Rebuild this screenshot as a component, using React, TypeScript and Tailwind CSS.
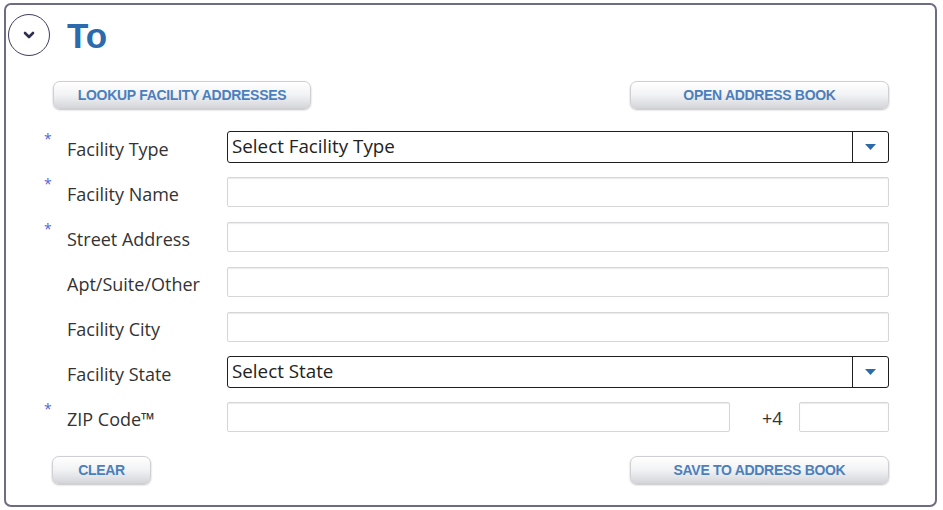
import React from "react";

const labelFont = { fontFamily: '"Open Sans", "Noto Sans", sans-serif' };

function GelButton({ label, width }: { label: string; width: string }) {
  return (
    <button
      className={`${width} h-[28px] rounded-[7px] border border-[#cfd0d4] bg-gradient-to-b from-white via-[#f1f2f4] to-[#d5d6da] shadow-[0_1px_2px_rgba(0,0,0,0.25)] text-[14px] font-bold tracking-[-0.3px] text-[#4b7fbc]`}
      style={{ fontFamily: '"Liberation Sans", Arial, sans-serif' }}
    >
      {label}
    </button>
  );
}

function Field({ kind, placeholder }: { kind: "input" | "select"; placeholder?: string }) {
  if (kind === "select") {
    return (
      <div className="flex h-[32px] w-full items-stretch rounded-[3px] border-[1.5px] border-[#1e1e1e] bg-white">
        <span className="flex flex-1 items-center pl-[4px] text-[18.8px] text-[#222]" style={labelFont}>
          {placeholder}
        </span>
        <span className="flex w-[36px] items-center justify-center border-l-[1.5px] border-[#1e1e1e]">
          <svg width="11" height="6" viewBox="0 0 11 6">
            <path d="M0 0h11L5.5 6z" fill="#2c6aa9" />
          </svg>
        </span>
      </div>
    );
  }
  return (
    <div className="h-[30px] w-full rounded-[2px] border border-[#d6d6d8] bg-white shadow-[inset_0_1px_1px_rgba(0,0,0,0.08)]" />
  );
}

const rows: { label: string; required: boolean; kind: "input" | "select"; placeholder?: string }[] = [
  { label: "Facility Type", required: true, kind: "select", placeholder: "Select Facility Type" },
  { label: "Facility Name", required: true, kind: "input" },
  { label: "Street Address", required: true, kind: "input" },
  { label: "Apt/Suite/Other", required: false, kind: "input" },
  { label: "Facility City", required: false, kind: "input" },
  { label: "Facility State", required: false, kind: "select", placeholder: "Select State" },
];

function Row({
  label,
  required,
  children,
}: {
  label: string;
  required: boolean;
  children: React.ReactNode;
}) {
  return (
    <div className="flex h-[45px] items-center pl-[38px] pr-[46px]">
      <span className="w-[23px] self-start pt-[8px] text-[14px] leading-none text-[#5563d6]" style={labelFont}>
        {required ? "*" : ""}
      </span>
      <span className="mt-[6px] w-[160px] text-[18px] text-[#333]" style={labelFont}>
        {label}
      </span>
      <div className="flex flex-1 items-center">{children}</div>
    </div>
  );
}

export default function App() {
  return (
    <div className="h-[510px] w-[943px] bg-white pl-[4px] pt-[3px]">
      <div className="h-[504px] w-[933px] rounded-[7px] border-2 border-[#6c6c84]">
        {/* header */}
        <div className="ml-[2px] mt-[9px] flex items-center">
          <div className="flex h-[42px] w-[42px] items-center justify-center rounded-full border-[1.5px] border-[#3e3e5e]">
            <svg width="12" height="8" viewBox="0 0 12 8">
              <path d="M2 2l4 4 4-4" fill="none" stroke="#2e2e52" strokeWidth="2.6" strokeLinecap="round" strokeLinejoin="round" />
            </svg>
          </div>
          <h1
            className="ml-[17px] text-[35px] font-bold leading-none text-[#2a6aad]"
            style={{ fontFamily: '"Liberation Sans", Arial, sans-serif' }}
          >
            To
          </h1>
        </div>

        <div className="mt-[25px] flex justify-between pl-[47px] pr-[46px]">
          <GelButton label="LOOKUP FACILITY ADDRESSES" width="w-[258px]" />
          <GelButton label="OPEN ADDRESS BOOK" width="w-[259px]" />
        </div>

        <div className="mt-[15px]">
          {rows.map((r) => (
            <Row key={r.label} label={r.label} required={r.required}>
              <Field kind={r.kind} placeholder={r.placeholder} />
            </Row>
          ))}
          <Row label="ZIP Code™" required>
            <div className="w-[503px]">
              <Field kind="input" />
            </div>
            <span className="ml-[32px] mt-[4px] w-[37px] text-[18px] text-[#333]" style={labelFont}>
              +4
            </span>
            <div className="flex-1">
              <Field kind="input" />
            </div>
          </Row>
        </div>

        <div className="mt-[17px] flex justify-between pl-[46px] pr-[46px]">
          <GelButton label="CLEAR" width="w-[99px]" />
          <GelButton label="SAVE TO ADDRESS BOOK" width="w-[259px]" />
        </div>
      </div>
    </div>
  );
}
